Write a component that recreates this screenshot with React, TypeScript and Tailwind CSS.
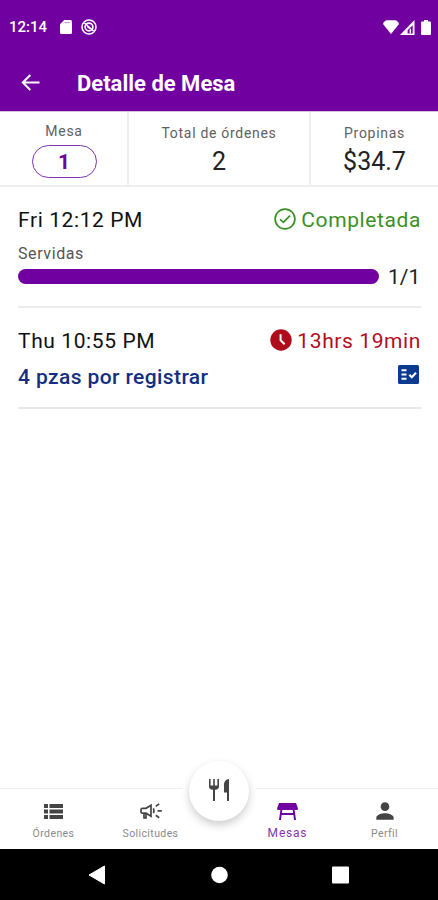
import type { ReactNode } from "react";
import { MdPerson } from "react-icons/md";

function StatusBar() {
  return (
    <div className="flex h-[54px] items-center justify-between pl-[9px] pr-[7px] text-white">
      <div className="flex items-center">
        <span className="w-[38px] text-[15px] leading-none font-medium">12:14</span>
        <svg className="ml-[13px] h-[14px] w-3" viewBox="0 0 12 14" fill="currentColor">
          <path d="M4.2 0H10.5Q12 0 12 1.5V12.5Q12 14 10.5 14H1.5Q0 14 0 12.5V4.2Z" />
          <path d="M4.5 2.6H9.8" stroke="#b987d0" strokeWidth="1" />
        </svg>
        <svg className="ml-[9px] h-4 w-4" viewBox="0 0 16 16" fill="none" stroke="currentColor">
          <circle cx="8" cy="8" r="7" strokeWidth="1.5" />
          <circle cx="8" cy="8" r="3.9" strokeWidth="1.7" />
          <path d="M3.5 4L12.5 12M6.3 7.5L9.4 10" strokeWidth="1.6" />
        </svg>
      </div>
      <div className="flex items-center">
        <svg className="h-[14px] w-4" viewBox="0 0 16 14" fill="currentColor">
          <path d="M0 4Q1.5 .3 4 .3H12Q14.5 .3 16 4L8 14Z" />
        </svg>
        <svg className="ml-px h-[15px] w-[15px]" viewBox="0 0 15 15" fill="currentColor">
          <path fillRule="evenodd" d="M14.5 0V15H0ZM12.7 5.2L7.6 10.3V13.4H12.7Z" />
          <path d="M9.6 9.7L11 8.3V13.5H9.6Z" />
        </svg>
        <svg className="ml-[6px] h-[15px] w-[10px]" viewBox="0 0 10 15" fill="currentColor">
          <path d="M3 0H7V1.6H9Q10 1.6 10 2.6V14Q10 15 9 15H1Q0 15 0 14V2.6Q0 1.6 1 1.6H3Z" />
        </svg>
      </div>
    </div>
  );
}

function Header() {
  return (
    <header className="h-[111px] bg-[#7000a0]">
      <StatusBar />
      <div className="flex h-[57px] items-center pl-[21px] text-white">
        <svg className="h-[17px] w-[19px]" viewBox="0 0 19 17" fill="none" stroke="currentColor" strokeWidth="2">
          <path d="M18.5 8.5H1.8M9.3 1L1.8 8.5L9.3 16" />
        </svg>
        <h1 className="ml-[37px] pt-0.5 text-[22px] leading-none font-bold">Detalle de Mesa</h1>
      </div>
    </header>
  );
}

function Summary() {
  return (
    <section className="flex h-[76px] border-t border-b-2 border-t-[#d8c4e2] border-b-[#eeeeee]">
      <div className="flex w-[129px] flex-col items-center border-r-2 border-[#f0f0f0] pt-[11px] pl-px">
        <span className="text-[14px] leading-[16px] tracking-[0.7px] text-[#616161]">Mesa</span>
        <span className="mt-[6px] flex h-[33px] w-[65px] items-center justify-center rounded-full border border-[#7b35b0] pt-0.5 text-[21px] leading-none font-bold text-[#7000a0]">
          1
        </span>
      </div>
      <div className="flex w-[182px] flex-col items-center border-r-2 border-[#f0f0f0] pt-[13px]">
        <span className="text-[14px] leading-[16px] tracking-[0.7px] text-[#616161]">Total de órdenes</span>
        <span className="mt-[7px] text-[25px] leading-[28px] text-[#222]">2</span>
      </div>
      <div className="flex flex-1 flex-col items-center pt-[13px]">
        <span className="text-[14px] leading-[16px] tracking-[0.7px] text-[#616161]">Propinas</span>
        <span className="mt-[7px] text-[25px] leading-[28px] text-[#222]">$34.7</span>
      </div>
    </section>
  );
}

function Orders() {
  return (
    <main className="flex-1 pr-[17px] pl-[18px]">
      <article className="h-[121px] border-b-2 border-[#ececec] pt-5">
        <div className="flex h-6 items-center justify-between">
          <span className="pt-px text-[21px] leading-6 tracking-[0.6px] text-[#111]">Fri 12:12 PM</span>
          <span className="flex items-center gap-[5px] text-[#3b8f26]">
            <svg className="size-[22px]" viewBox="0 0 22 22" fill="none" stroke="currentColor" strokeWidth="1.7">
              <circle cx="11" cy="11" r="9.9" />
              <path d="M6 11.3L9.4 14.3L16 7.6" />
            </svg>
            <span className="pt-px text-[21px] leading-6 tracking-[0.6px]">Completada</span>
          </span>
        </div>
        <p className="mt-[13px] text-[16px] leading-5 tracking-[0.6px] text-[#555]">Servidas</p>
        <div className="flex h-6 items-center gap-[9px]">
          <div className="h-[15px] w-[361px] rounded-full bg-[#7000a0]" />
          <span className="pt-px text-[21px] leading-6 text-[#222]">1/1</span>
        </div>
      </article>
      <article className="h-[101px] border-b-2 border-[#e8e8e8] pt-5">
        <div className="flex h-6 items-center justify-between">
          <span className="pt-px text-[21px] leading-6 tracking-[0.6px] text-[#111]">Thu 10:55 PM</span>
          <span className="flex items-center gap-[5px] text-[#b00d1c]">
            <svg className="size-[22px]" viewBox="0 0 22 22">
              <circle cx="11" cy="11" r="10.7" fill="currentColor" />
              <path d="M10.6 5.3V11.3L14.6 15.2" fill="none" stroke="#fff" strokeWidth="2" />
            </svg>
            <span className="pt-px text-[21px] leading-6 tracking-[0.6px]">13hrs 19min</span>
          </span>
        </div>
        <div className="mt-3 flex h-6 items-center justify-between">
          <span className="pt-px text-[21px] leading-6 font-medium tracking-[0.4px] text-[#122f83]">
            4 pzas por registrar
          </span>
          <svg className="mr-[2px] mb-[3px] h-[19px] w-[21px]" viewBox="0 0 21 19">
            <rect width="21" height="19" rx="1.5" fill="#0b3b8e" />
            <path d="M3.5 5.2H8.5M3.5 9.5H8.5M3.5 13.8H8.5" stroke="#fff" strokeWidth="2" />
            <path d="M11.3 9.7L13.8 12.2L18 7.8" stroke="#fff" strokeWidth="2.2" fill="none" />
          </svg>
        </div>
      </article>
    </main>
  );
}

function Tab({ label, active, children }: { label: string; active?: boolean; children: ReactNode }) {
  return (
    <div className={`flex w-[97px] flex-col items-center pt-3 ${active ? "text-[#7000a0]" : "text-[#444]"}`}>
      <div className="flex h-5 items-center">{children}</div>
      <span
        className={
          active
            ? "mt-[5px] text-[12px] leading-[14px] tracking-[0.8px] text-[#8536ad]"
            : "mt-[6px] text-[10.5px] leading-[14px] tracking-[0.4px] text-[#8a8a8a]"
        }
      >
        {label}
      </span>
    </div>
  );
}

function BottomTabs() {
  return (
    <nav className="relative flex h-[61px] justify-between border-t border-[#eeeeee] bg-white px-[5px]">
      <div className="flex">
        <Tab label="Órdenes">
          <svg className="h-[15px] w-[19px]" viewBox="0 0 19 15" fill="currentColor">
            <path d="M0 0H4V4H0ZM5.5 0H19V4H5.5ZM0 5.5H4V9.5H0ZM5.5 5.5H19V9.5H5.5ZM0 11H4V15H0ZM5.5 11H19V15H5.5Z" />
          </svg>
        </Tab>
        <Tab label="Solicitudes">
          <svg className="h-[17px] w-[22px]" viewBox="0 0 22 17" fill="none" stroke="currentColor" strokeWidth="1.7">
            <path d="M6 5.3H2.5Q1 5.3 1 6.8V8.7Q1 10.2 2.5 10.2H6L11 13.2V2.3ZM4 10.2V14.8H6V10.2M13.4 5.3Q14.5 7.8 13.4 10.2M17.5 7.8H21.8M15.8 3.4L19.2 .9M15.8 12.2L19.2 14.7" />
          </svg>
        </Tab>
      </div>
      <div className="flex">
        <Tab label="Mesas" active>
          <svg className="h-[17px] w-[21px]" viewBox="0 0 21 17" fill="currentColor">
            <path d="M2 0H19L21 5.5Q21 7 19.5 7H1.5Q0 7 0 5.5ZM3.4 7H5.3L4.9 10H16.1L15.7 7H17.6L19 17H17L16.4 12H4.6L4 17H2Z" />
          </svg>
        </Tab>
        <Tab label="Perfil">
          <MdPerson className="size-[26px] text-[#444]" />
        </Tab>
      </div>
      {/* white cutout behind the floating button */}
      <span className="absolute -top-[34px] left-1/2 size-[74px] -translate-x-1/2 rounded-full bg-white" />
      <button
        aria-label="Menú"
        className="absolute -top-[28px] left-1/2 flex size-[60px] -translate-x-1/2 items-center justify-center rounded-full bg-white pb-0.5 text-[#444] shadow-[0_4px_8px_rgba(0,0,0,0.2)]"
      >
        <svg className="h-[22px] w-5" viewBox="0 0 20 22" fill="currentColor">
          <path d="M0 0H1.6V6.5H4.2V0H5.8V6.5H8.4V0H10V7.5Q10 10.4 6 10.8V22H4V10.8Q0 10.4 0 7.5ZM20 0V22H18V13.5H15V5Q15.5 .7 20 0Z" />
        </svg>
      </button>
    </nav>
  );
}

function SystemNav() {
  return (
    <div className="h-[51px] bg-black text-white">
      <svg className="h-full w-full" viewBox="0 0 438 51" fill="currentColor">
        <path d="M89 26L104.5 17V35Z" stroke="currentColor" strokeLinejoin="round" />
        <circle cx="219.5" cy="26" r="8.3" />
        <rect x="332" y="17.5" width="17" height="17" rx="1" />
      </svg>
    </div>
  );
}

export default function App() {
  return (
    <div className="flex h-screen w-full flex-col overflow-hidden bg-white font-['Roboto',sans-serif]">
      <Header />
      <Summary />
      <Orders />
      <BottomTabs />
      <SystemNav />
    </div>
  );
}
